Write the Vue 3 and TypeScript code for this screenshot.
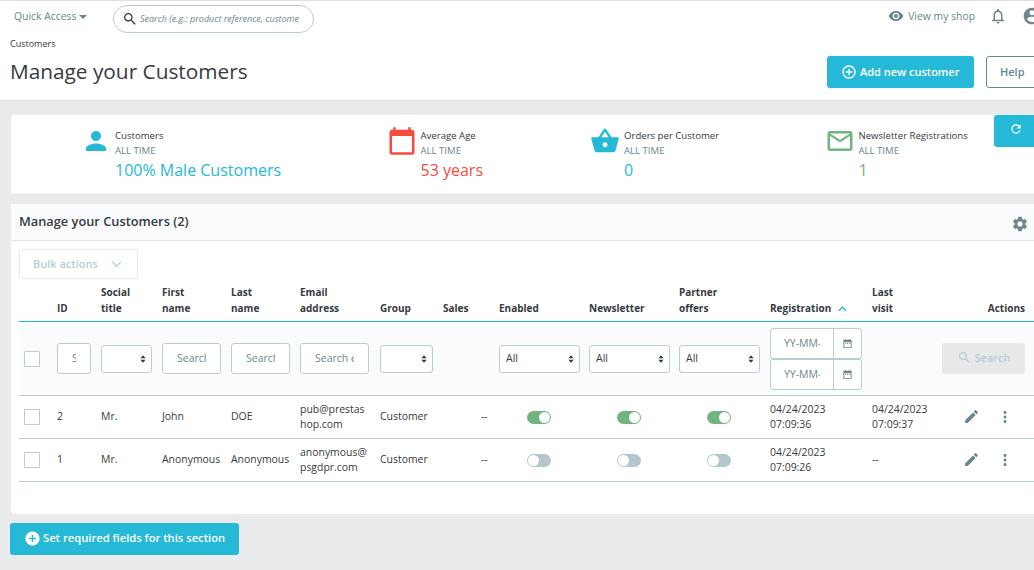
<script setup lang="ts">
import { ref } from 'vue';

interface Kpi {
    label: string;
    value: string;
    tone: string;
    icon: string;
}

interface Customer {
    id: number;
    social: string;
    first: string;
    last: string;
    email: string[];
    group: string;
    sales: string;
    enabled: boolean;
    newsletter: boolean;
    partner: boolean;
    registered: string[];
    visited: string[];
}

const calendarPath =
    'M20 3h-1V1h-2v2H7V1H5v2H4c-1.1 0-2 .9-2 2v16c0 1.1.9 2 2 2h16c1.1 0 2-.9 2-2V5c0-1.1-.9-2-2-2zm0 18H4V8h16v13z';
const dateRangePath =
    'M9 11H7v2h2v-2zm4 0h-2v2h2v-2zm4 0h-2v2h2v-2zm2-7h-1V2h-2v2H8V2H6v2H5c-1.11 0-1.99.9-1.99 2L3 20c0 1.1.89 2 2 2h14c1.1 0 2-.9 2-2V6c0-1.1-.9-2-2-2zm0 16H5V9h14v11z';
const searchPath =
    'M15.5 14h-.79l-.28-.27C15.41 12.59 16 11.11 16 9.5 16 5.91 13.09 3 9.5 3S3 5.91 3 9.5 5.91 16 9.5 16c1.61 0 3.09-.59 4.23-1.57l.27.28v.79l5 4.99L20.49 19l-4.99-5zm-6 0C7.01 14 5 11.99 5 9.5S7.01 5 9.5 5 14 7.01 14 9.5 11.99 14 9.5 14z';

const kpis: Kpi[] = [
    {
        label: 'Customers',
        value: '100% Male Customers',
        tone: 'blue',
        icon: 'M12 12c2.21 0 4-1.79 4-4s-1.79-4-4-4-4 1.79-4 4 1.79 4 4 4zm0 2c-2.67 0-8 1.34-8 4v2h16v-2c0-2.66-5.33-4-8-4z',
    },
    { label: 'Average Age', value: '53 years', tone: 'red', icon: calendarPath },
    {
        label: 'Orders per Customer',
        value: '0',
        tone: 'blue',
        icon: 'M17.21 9l-4.38-6.56c-.19-.28-.51-.42-.83-.42-.32 0-.64.14-.83.43L6.79 9H2c-.55 0-1 .45-1 1 0 .09.01.18.04.27l2.54 9.27c.23.84 1 1.46 1.92 1.46h13c.92 0 1.69-.62 1.93-1.46l2.54-9.27L23 10c0-.55-.45-1-1-1h-4.79zM9 9l3-4.4L15 9H9zm3 8c-1.1 0-2-.9-2-2s.9-2 2-2 2 .9 2 2-.9 2-2 2z',
    },
    {
        label: 'Newsletter Registrations',
        value: '1',
        tone: 'green',
        icon: 'M20 4H4c-1.1 0-1.99.9-1.99 2L2 18c0 1.1.9 2 2 2h16c1.1 0 2-.9 2-2V6c0-1.1-.9-2-2-2zm0 14H4V8l8 5 8-5v10zm-8-7L4 6h16l-8 5z',
    },
];

const customers = ref<Customer[]>([
    {
        id: 2,
        social: 'Mr.',
        first: 'John',
        last: 'DOE',
        email: ['pub@prestas', 'hop.com'],
        group: 'Customer',
        sales: '--',
        enabled: true,
        newsletter: true,
        partner: true,
        registered: ['04/24/2023', '07:09:36'],
        visited: ['04/24/2023', '07:09:37'],
    },
    {
        id: 1,
        social: 'Mr.',
        first: 'Anonymous',
        last: 'Anonymous',
        email: ['anonymous@', 'psgdpr.com'],
        group: 'Customer',
        sales: '--',
        enabled: false,
        newsletter: false,
        partner: false,
        registered: ['04/24/2023', '07:09:26'],
        visited: ['--'],
    },
]);

const toggle = (customer: Customer, key: 'enabled' | 'newsletter' | 'partner') => {
    customer[key] = !customer[key];
};
</script>

<template>
    <div class="page">
        <header class="head">
            <div class="topbar">
                <button class="quick">Quick Access <span class="caret"></span></button>
                <div class="global-search">
                    <svg class="ic" viewBox="0 0 24 24" width="18" height="18"><path :d="searchPath" /></svg>
                    <input type="text" placeholder="Search (e.g.: product reference, customer name…)" />
                </div>
                <a class="shop">
                    <svg viewBox="0 0 24 24" width="16" height="16"><path d="M12 4.5C7 4.5 2.73 7.61 1 12c1.73 4.39 6 7.5 11 7.5s9.27-3.11 11-7.5c-1.73-4.39-6-7.5-11-7.5zM12 17c-2.76 0-5-2.24-5-5s2.24-5 5-5 5 2.24 5 5-2.24 5-5 5zm0-8c-1.66 0-3 1.34-3 3s1.34 3 3 3 3-1.34 3-3-1.34-3-3-3z" /></svg>
                    View my shop
                </a>
                <svg class="bell" viewBox="0 0 24 24" width="18" height="18"><path d="M12 22c1.1 0 2-.9 2-2h-4c0 1.1.9 2 2 2zm6-6v-5c0-3.07-1.63-5.64-4.5-6.32V4c0-.83-.67-1.5-1.5-1.5s-1.5.67-1.5 1.5v.68C7.64 5.36 6 7.92 6 11v5l-2 2v1h16v-1l-2-2zm-2 1H8v-6c0-2.48 1.51-4.5 4-4.5s4 2.02 4 4.5v6z" /></svg>
                <svg class="account" viewBox="0 0 24 24" width="20" height="20"><path d="M12 2C6.48 2 2 6.48 2 12s4.48 10 10 10 10-4.48 10-10S17.52 2 12 2zm0 3c1.66 0 3 1.34 3 3s-1.34 3-3 3-3-1.34-3-3 1.34-3 3-3zm0 14.2c-2.5 0-4.71-1.28-6-3.22.03-1.99 4-3.08 6-3.08 1.99 0 5.97 1.09 6 3.08-1.29 1.94-3.5 3.22-6 3.22z" /></svg>
            </div>
            <div class="crumb">Customers</div>
            <div class="title-row">
                <h1>Manage your Customers</h1>
                <button class="btn-primary add">
                    <svg viewBox="0 0 24 24" width="16" height="16"><path d="M13 7h-2v4H7v2h4v4h2v-4h4v-2h-4V7zm-1-5C6.48 2 2 6.48 2 12s4.48 10 10 10 10-4.48 10-10S17.52 2 12 2zm0 18c-4.41 0-8-3.59-8-8s3.59-8 8-8 8 3.59 8 8-3.59 8-8 8z" /></svg>
                    Add new customer
                </button>
                <button class="help">Help</button>
            </div>
        </header>

        <section class="kpis">
            <div v-for="kpi in kpis" :key="kpi.label" class="kpi" :class="kpi.tone">
                <svg viewBox="0 0 24 24"><path :d="kpi.icon" /></svg>
                <div class="kpi-text">
                    <div class="kpi-label">{{ kpi.label }}</div>
                    <div class="kpi-sub">ALL TIME</div>
                    <div class="kpi-value">{{ kpi.value }}</div>
                </div>
            </div>
            <button class="refresh">
                <svg viewBox="0 0 24 24" width="14" height="14"><path d="M17.65 6.35C16.2 4.9 14.21 4 12 4c-4.42 0-7.99 3.58-7.99 8s3.57 8 7.99 8c3.73 0 6.84-2.55 7.73-6h-2.08c-.82 2.33-3.04 4-5.65 4-3.31 0-6-2.69-6-6s2.69-6 6-6c1.66 0 3.14.69 4.22 1.78L13 11h7V4l-2.35 2.35z" /></svg>
            </button>
        </section>

        <section class="card">
            <div class="card-head">
                <h2>Manage your Customers (2)</h2>
                <svg viewBox="0 0 24 24" width="18" height="18"><path d="M19.14 12.94c.04-.3.06-.61.06-.94 0-.32-.02-.64-.07-.94l2.03-1.58c.18-.14.23-.41.12-.61l-1.92-3.32c-.12-.22-.37-.29-.59-.22l-2.39.96c-.5-.38-1.03-.7-1.62-.94l-.36-2.54c-.04-.24-.24-.41-.48-.41h-3.84c-.24 0-.43.17-.47.41l-.36 2.54c-.59.24-1.13.57-1.62.94l-2.39-.96c-.22-.08-.47 0-.59.22L2.74 8.87c-.12.21-.08.47.12.61l2.03 1.58c-.05.3-.09.63-.09.94s.02.64.07.94l-2.03 1.58c-.18.14-.23.41-.12.61l1.92 3.32c.12.22.37.29.59.22l2.39-.96c.5.38 1.03.7 1.62.94l.36 2.54c.05.24.24.41.48.41h3.84c.24 0 .44-.17.47-.41l.36-2.54c.59-.24 1.13-.56 1.62-.94l2.39.96c.22.08.47 0 .59-.22l1.92-3.32c.12-.22.07-.47-.12-.61l-2.01-1.58zM12 15.6c-1.98 0-3.6-1.62-3.6-3.6s1.62-3.6 3.6-3.6 3.6 1.62 3.6 3.6-1.62 3.6-3.6 3.6z" /></svg>
            </div>
            <div class="card-body">
                <button class="bulk">
                    Bulk actions
                    <svg viewBox="0 0 12 8" width="11" height="7"><path d="M1 1l5 5 5-5" /></svg>
                </button>

                <div class="grid-row heads">
                    <span></span>
                    <span>ID</span>
                    <span>Social<br />title</span>
                    <span>First<br />name</span>
                    <span>Last<br />name</span>
                    <span>Email<br />address</span>
                    <span>Group</span>
                    <span>Sales</span>
                    <span>Enabled</span>
                    <span>Newsletter</span>
                    <span>Partner<br />offers</span>
                    <span class="sorted">Registration
                        <svg viewBox="0 0 10 6" width="9" height="6"><path d="M1 5l4-4 4 4" /></svg>
                    </span>
                    <span>Last<br />visit</span>
                    <span class="actions-title">Actions</span>
                </div>

                <div class="grid-row filters">
                    <span class="box"></span>
                    <input class="field id" placeholder="Search ID" />
                    <label class="sel"><select></select><svg class="updown" viewBox="0 0 8 10"><path d="M4 0l3.5 4h-7zM4 10l3.5-4h-7z" /></svg></label>
                    <input class="field" placeholder="Search first name" />
                    <input class="field" placeholder="Search last name" />
                    <input class="field mail" placeholder="Search email" />
                    <label class="sel group"><select></select><svg class="updown" viewBox="0 0 8 10"><path d="M4 0l3.5 4h-7zM4 10l3.5-4h-7z" /></svg></label>
                    <span></span>
                    <label class="sel wide"><select><option>All</option></select><svg class="updown" viewBox="0 0 8 10"><path d="M4 0l3.5 4h-7zM4 10l3.5-4h-7z" /></svg></label>
                    <label class="sel wide"><select><option>All</option></select><svg class="updown" viewBox="0 0 8 10"><path d="M4 0l3.5 4h-7zM4 10l3.5-4h-7z" /></svg></label>
                    <label class="sel wide"><select><option>All</option></select><svg class="updown" viewBox="0 0 8 10"><path d="M4 0l3.5 4h-7zM4 10l3.5-4h-7z" /></svg></label>
                    <div class="dates">
                        <div v-for="n in 2" :key="n" class="date">
                            <input placeholder="YY-MM-DD" />
                            <span><svg viewBox="0 0 24 24" width="11" height="11"><path :d="dateRangePath" /></svg></span>
                        </div>
                    </div>
                    <span></span>
                    <button class="search-btn" disabled>
                        <svg viewBox="0 0 24 24" width="15" height="15"><path :d="searchPath" /></svg>
                        Search
                    </button>
                </div>

                <div v-for="c in customers" :key="c.id" class="grid-row line">
                    <span class="box"></span>
                    <span>{{ c.id }}</span>
                    <span>{{ c.social }}</span>
                    <span>{{ c.first }}</span>
                    <span>{{ c.last }}</span>
                    <span>{{ c.email[0] }}<br />{{ c.email[1] }}</span>
                    <span>{{ c.group }}</span>
                    <span class="sales">{{ c.sales }}</span>
                    <span class="sw-cell"><button class="sw" :class="{ on: c.enabled }" @click="toggle(c, 'enabled')"></button></span>
                    <span class="sw-cell"><button class="sw" :class="{ on: c.newsletter }" @click="toggle(c, 'newsletter')"></button></span>
                    <span class="sw-cell"><button class="sw" :class="{ on: c.partner }" @click="toggle(c, 'partner')"></button></span>
                    <span>{{ c.registered[0] }}<br />{{ c.registered[1] }}</span>
                    <span><template v-for="(part, i) in c.visited" :key="i"><br v-if="i" />{{ part }}</template></span>
                    <span class="row-actions">
                        <svg viewBox="0 0 24 24" width="17" height="17"><path d="M3 17.25V21h3.75L17.81 9.94l-3.75-3.75L3 17.25zM20.71 7.04c.39-.39.39-1.02 0-1.41l-2.34-2.34c-.39-.39-1.02-.39-1.41 0l-1.83 1.83 3.75 3.75 1.83-1.83z" /></svg>
                        <svg viewBox="0 0 24 24" width="18" height="18"><path d="M12 8c1.1 0 2-.9 2-2s-.9-2-2-2-2 .9-2 2 .9 2 2 2zm0 2c-1.1 0-2 .9-2 2s.9 2 2 2 2-.9 2-2-.9-2-2-2zm0 6c-1.1 0-2 .9-2 2s.9 2 2 2 2-.9 2-2-.9-2-2-2z" /></svg>
                    </span>
                </div>
            </div>
        </section>

        <button class="btn-primary required">
            <svg viewBox="0 0 24 24" width="17" height="17"><path d="M12 2C6.48 2 2 6.48 2 12s4.48 10 10 10 10-4.48 10-10S17.52 2 12 2zm5 11h-4v4h-2v-4H7v-2h4V7h2v4h4v2z" /></svg>
            Set required fields for this section
        </button>
    </div>
</template>

<style scoped>
.page {
    width: 1060px;
    height: 570px;
    background: #eaebec;
    color: #363a41;
    font-family: 'Open Sans', 'Liberation Sans', sans-serif;
    font-size: 10.45px;
}

button,
input,
select {
    font-family: inherit;
}

.head {
    height: 101px;
    box-sizing: border-box;
    background: #fff;
    border-top: 1px solid #dfdfdf;
    border-bottom: 1px solid #dfdfdf;
}

.topbar {
    height: 35px;
    display: flex;
    align-items: center;
    padding-left: 14px;
    color: #6c868e;
}

.quick {
    border: 0;
    background: none;
    padding: 0;
    width: 99px;
    text-align: left;
    font-size: 10.4px;
    color: #6c868e;
    margin-top: -5px;
}

.caret {
    display: inline-block;
    border: 4px solid transparent;
    border-top-color: #6c868e;
    border-bottom: 0;
    vertical-align: middle;
}

.global-search {
    width: 201px;
    height: 28px;
    box-sizing: border-box;
    display: flex;
    align-items: center;
    gap: 2px;
    padding: 0 14px 0 8px;
    border: 1px solid #bbcdd2;
    border-radius: 14px;
}

.global-search .ic {
    flex: none;
    fill: #363a41;
    width: 16px;
}

.global-search input {
    flex: 1;
    min-width: 0;
    border: 0;
    outline: 0;
    padding: 0;
    font-size: 9px;
    font-style: italic;
    background: none;
}

.global-search input::placeholder {
    color: #6c868e;
}

.shop {
    margin-left: auto;
    display: flex;
    align-items: center;
    gap: 4px;
    font-size: 10.4px;
    margin-top: -5px;
}

.shop svg {
    fill: #6c868e;
}

.bell {
    margin: -5px 0 0 14px;
    fill: #6c868e;
}

.account {
    margin: -5px 18px 0 15px;
    fill: #6c868e;
}

.crumb {
    padding-left: 10px;
    font-size: 9px;
    line-height: 14px;
    margin-top: 1px;
}

.title-row {
    display: flex;
    align-items: center;
    margin-top: 5px;
    padding-left: 10px;
}

h1 {
    margin: -1px auto 1px 0;
    font-size: 20.8px;
    font-weight: 400;
    line-height: 32px;
}

.btn-primary {
    display: flex;
    align-items: center;
    border: 0;
    border-radius: 3px;
    background: #25b9d7;
    color: #fff;
    font-size: 11px;
    font-weight: 600;
}

.btn-primary svg {
    fill: #fff;
    margin-top: 2px;
}

.add {
    width: 147px;
    height: 32px;
    padding: 0 0 2px 14px;
    gap: 3px;
}

.help {
    width: 74px;
    height: 32px;
    margin-left: 12px;
    box-sizing: border-box;
    background: #fff;
    border: 1px solid #6c868e;
    border-radius: 3px;
    padding: 0 0 1px 13px;
    text-align: left;
    color: #6c868e;
    font-size: 11px;
    font-weight: 600;
}

.kpis {
    position: relative;
    height: 80px;
    margin: 14px 0 0 11px;
    box-sizing: border-box;
    padding: 11px 0 0 70px;
    background: #fff;
    border-radius: 3px;
    display: grid;
    grid-template-columns: 305.5px 203.5px 234.5px 1fr;
    border-bottom: 1px solid #dbe6e9;
}

.kpi {
    display: flex;
    gap: 4px;
}

.kpi svg {
    flex: none;
    width: 30px;
    height: 30px;
}

.kpi-text {
    padding-top: 2px;
}

.kpi-label {
    font-size: 9.6px;
    line-height: 16px;
}

.kpi-sub {
    font-size: 9.6px;
    line-height: 14px;
    color: #6c868e;
}

.kpi-value {
    font-size: 16px;
    line-height: 24px;
}

.kpi.blue svg {
    fill: #25b9d7;
}

.kpi.blue .kpi-value {
    color: #25b9d7;
}

.kpi.red svg {
    fill: #f54c3e;
}

.kpi.red .kpi-value {
    color: #f54c3e;
}

.kpi.green svg {
    fill: #70b580;
}

.kpi.green .kpi-value {
    color: #70b580;
}

.refresh {
    position: absolute;
    top: 0;
    left: 983px;
    width: 60px;
    height: 32px;
    border: 0;
    border-radius: 3px 0 0 3px;
    background: #25b9d7;
    padding: 0 0 0 15px;
    text-align: left;
}

.refresh svg {
    fill: #fff;
}

.card {
    margin: 9px 0 0 11px;
    height: 310px;
    background: #fff;
    border-radius: 3px;
}

.card-head {
    height: 37px;
    box-sizing: border-box;
    display: flex;
    align-items: center;
    justify-content: space-between;
    padding: 0 31px 2px 8px;
    background: #fafbfc;
    border-bottom: 1px solid #dbe6e9;
}

.card-head svg {
    fill: #6c868e;
    margin-top: 5px;
}

h2 {
    margin: 0;
    font-size: 12.8px;
    font-weight: 600;
}

.card-body {
    padding: 8px 0 0 8px;
}

.bulk {
    width: 119px;
    height: 30px;
    display: flex;
    align-items: center;
    justify-content: space-between;
    box-sizing: border-box;
    padding: 0 13px 2px;
    background: #fff;
    border: 1px solid #e6ecee;
    border-radius: 3px;
    color: #b7ced3;
    font-size: 11px;
    font-weight: 600;
}

.bulk svg {
    fill: none;
    stroke: #b7ced3;
    stroke-width: 1.6;
    margin: 2px 2px 0 0;
}

.grid-row {
    display: grid;
    grid-template-columns: 38px 44px 61px 69px 69px 80px 63px 56px 90px 90px 91px 102px 70px 1fr;
    align-items: center;
}

.heads {
    height: 37px;
    align-items: end;
    font-size: 10px;
    font-weight: 700;
    line-height: 16px;
    padding-bottom: 5px;
    border-bottom: 1px solid #25b9d7;
}

.sorted svg {
    fill: none;
    stroke: #25b9d7;
    stroke-width: 1.6;
    margin-left: 4px;
}

.actions-title {
    width: 83px;
    text-align: right;
}

.filters {
    height: 73px;
    background: #fafbfc;
    border-bottom: 1px solid #bbcdd2;
}

.box {
    display: block;
    width: 16px;
    height: 16px;
    box-sizing: border-box;
    margin-left: 5px;
    background: #fff;
    border: 1px solid #bbcdd2;
    border-radius: 1px;
}

.field {
    box-sizing: border-box;
    width: 59px;
    height: 31px;
    padding: 0 14px 1px;
    border: 1px solid #bbcdd2;
    border-radius: 3px;
    background: #fff;
    font-size: 10.5px;
    outline: 0;
}

.field::placeholder,
.date input::placeholder {
    color: #6c868e;
}

.field.id {
    width: 34px;
}

.field.mail {
    width: 69px;
}

.sel {
    position: relative;
    display: block;
    width: 51px;
    height: 28px;
}

.sel.group {
    width: 53px;
}

.sel.wide {
    width: 81px;
}

.sel select {
    appearance: none;
    width: 100%;
    height: 100%;
    box-sizing: border-box;
    padding: 0 0 2px 6px;
    border: 1px solid #bbcdd2;
    border-radius: 3px;
    background: #fff;
    color: #363a41;
    font-size: 10.5px;
}

.updown {
    position: absolute;
    right: 6px;
    top: 10px;
    width: 6px;
    height: 8px;
    fill: #363a41;
}

.dates {
    display: flex;
    flex-direction: column;
}

.date {
    display: flex;
    width: 92px;
    height: 31px;
    box-sizing: border-box;
    border: 1px solid #bbcdd2;
    border-radius: 3px;
    background: #fff;
}

.date input {
    width: 62px;
    box-sizing: border-box;
    border: 0;
    outline: 0;
    padding: 0 13px 1px 13px;
    background: none;
    font-size: 10.5px;
}

.date span {
    flex: 1;
    display: flex;
    align-items: center;
    justify-content: center;
    border-left: 1px solid #bbcdd2;
}

.date svg {
    fill: #6c868e;
}

.search-btn {
    display: flex;
    align-items: center;
    justify-content: center;
    gap: 3px;
    width: 83px;
    height: 31px;
    padding: 0 0 2px;
    border: 0;
    border-radius: 3px;
    background: #e6e8ea;
    color: #b7ced3;
    font-size: 11px;
    font-weight: 600;
}

.search-btn svg {
    fill: #b7ced3;
}

.line {
    height: 43px;
    box-sizing: border-box;
    border-bottom: 1px solid #bbcdd2;
    line-height: 15px;
    padding-bottom: 1px;
}

.sales {
    padding-left: 38px;
}

.sw-cell {
    display: flex;
    padding: 2px 0 0 27.5px;
    line-height: 0;
}

.sw {
    position: relative;
    width: 24px;
    height: 13px;
    padding: 0;
    border: 0;
    border-radius: 7px;
    background: #b3c7cd;
}

.sw::after {
    content: '';
    position: absolute;
    left: 1px;
    top: 1px;
    width: 11px;
    height: 11px;
    border-radius: 50%;
    background: #fff;
}

.sw.on {
    background: #70b580;
}

.sw.on::after {
    left: 12px;
}

.row-actions {
    display: flex;
    align-items: center;
    gap: 16px;
    padding: 0 0 0 21px;
}

.row-actions svg {
    fill: #6c868e;
}

.required {
    width: 229px;
    height: 32px;
    margin: 9px 0 0 10px;
    padding: 0 0 3px 14px;
    gap: 2px;
    font-size: 11.2px;
}
</style>

<style>
html,
body {
    overflow: hidden;
}
</style>
